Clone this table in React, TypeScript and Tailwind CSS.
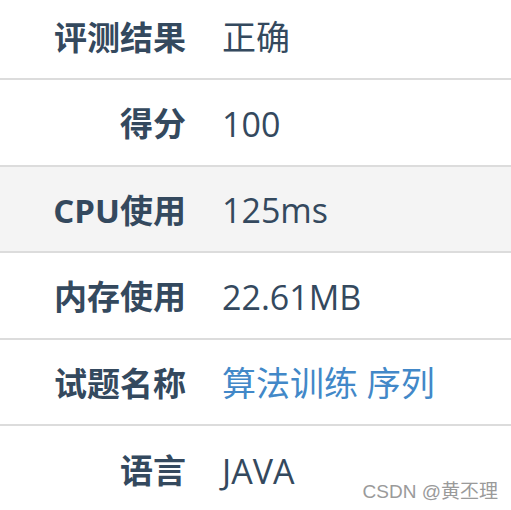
import React from 'react';

interface Row {
  label: string;
  value: string;
  link?: boolean;
  shaded?: boolean;
}

const rows: Row[] = [
  { label: '评测结果', value: '正确' },
  { label: '得分', value: '100' },
  { label: 'CPU使用', value: '125ms', shaded: true },
  { label: '内存使用', value: '22.61MB' },
  { label: '试题名称', value: '算法训练 序列', link: true },
  { label: '语言', value: 'JAVA' },
];

const font = {
  fontFamily: '"Open Sans", "Noto Sans CJK SC", sans-serif',
};

const App = () => {
  return (
    <div className="relative h-[510px] w-[511px] overflow-hidden bg-white" style={font}>
      {rows.map((row, i) => (
        <div
          key={row.label}
          className={`flex items-center border-[#dcdcdc] ${
            i === 0 ? 'h-[80px] border-b-[2px] pb-[4px]' : i === rows.length - 1 ? 'h-[86px] pt-[3px]' : 'h-[86.5px] border-b-[2px] pt-[3px]'
          } ${row.shaded ? 'bg-[#f4f4f4]' : 'bg-white'}`}
        >
          <div className="w-[186px] text-right text-[33px] font-bold leading-none text-[#34495e]">
            {row.label}
          </div>
          <div
            className={`pl-[36px] text-[34px] leading-none ${
              row.link ? 'text-[#4288c8]' : 'text-[#34495e]'
            }`}
          >
            {row.value}
          </div>
        </div>
      ))}
      <div
        className="absolute bottom-[9px] right-[13px] text-[19px] leading-none text-[#9a9a9a]"
        style={{ fontFamily: '"Liberation Sans", "Noto Sans CJK SC", sans-serif' }}
      >
        CSDN @黄丕理
      </div>
    </div>
  );
};

export default App;
